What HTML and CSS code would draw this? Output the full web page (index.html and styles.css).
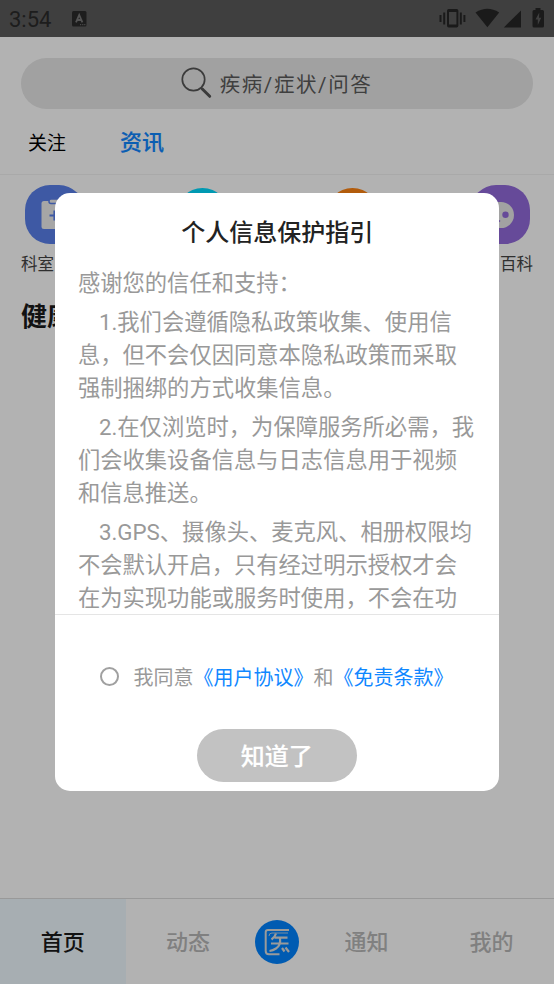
FILE: index.html
```
<!DOCTYPE html>
<html lang="zh-CN">
<head>
<meta charset="utf-8">
<title>资讯</title>
<link rel="stylesheet" href="styles.css">
</head>
<body>
<div class="app">
  <header class="status">
    <span class="clock">3:54</span>
    <svg class="status-app" width="15" height="16" viewBox="0 0 15 16"><rect width="14.5" height="15.5" rx="1.5" fill="#2a2a2a"/><path d="M4 11.3 7.2 4l3.2 7.3M5 9h4.4" fill="none" stroke="#777" stroke-width="1.8"/><path d="M8 13.7h1.2M10.2 13.7h1.2M12.2 13.7h1.2" stroke="#777"/></svg>
    <svg class="status-icons" width="108" height="22" viewBox="0 0 108 22">
      <g fill="#262626">
        <path fill-rule="evenodd" d="M9.7 1h8q1.7 0 1.7 1.700v15q0 1.700-1.700 1.700h-8q-1.700 0-1.700-1.700V2.700Q8 1 9.700 1ZM10 4v12.500h7.400V4Z"/>
        <path d="M.5 7h2v7h-2zM4.200 4.500h2v12h-2zM20.800 4.500h2v12h-2zM24.400 7h2v7h-2z"/>
        <path d="M36.500 4.500Q48.400-3 60.200 4.500L48.400 19.300Z"/>
        <path d="M82 2.500V19.500H64.800Z"/>
        <path d="M96.500 0h5v2h2q1.500 0 1.500 1.500V18q0 1.500-1.500 1.500h-8.500Q93.500 19.500 93.500 18V3.500Q93.500 2 95 2H96.500Z"/>
      </g>
      <path d="M100.300 4.500 96.500 11.500h2.300V17l3.400-7.300h-2.200Z" fill="#5b5b5b"/>
    </svg>
  </header>

  <div class="search">
    <svg width="31" height="32" viewBox="0 0 31 32" fill="none" stroke="#555"><circle cx="12.500" cy="12.500" r="11.200" stroke-width="1.700"/><path d="m20 21 2 1" stroke-width="1.500"/><path d="m21.300 22 7.400 7.300" stroke-width="3" stroke-linecap="round"/></svg>
    <span>疾病/症状/问答</span>
  </div>

  <div class="tabs"><span class="tab">关注</span><span class="tab active">资讯</span></div>

  <div class="shortcuts">
    <div class="shortcut first">
      <svg width="59" height="59" viewBox="0 0 59 59"><rect width="59" height="59" rx="25" fill="#5980eb"/><rect x="16.500" y="16" width="26" height="28" rx="2.500" fill="#eee"/><rect x="24" y="14" width="11" height="4.500" rx="2" fill="#eee" stroke="#5980eb" stroke-width="1.500"/><path d="M29.500 25.500v10M24.500 30.500h10" stroke="#5980eb" stroke-width="2.200"/></svg>
      <span>科室</span>
    </div>
    <div class="shortcut middle"><i class="dot teal"></i></div>
    <div class="shortcut middle"><i class="dot orange"></i></div>
    <div class="shortcut last">
      <svg width="59" height="59" viewBox="0 0 59 59"><rect width="59" height="59" rx="25" fill="#936bdb"/><rect x="15" y="17" width="28" height="26" rx="13" fill="#e8e8e8"/><circle cx="34.500" cy="29.800" r="3.200" fill="#936bdb"/><circle cx="23" cy="29.800" r="3.200" fill="#936bdb"/><path d="M24 35q3 3 5 .5" fill="none" stroke="#936bdb" stroke-width="1.500"/></svg>
      <span>百科</span>
    </div>
  </div>

  <h2 class="section">健康</h2>

  <nav class="nav">
    <span class="nav-item current">首页</span>
    <span class="nav-item">动态</span>
    <span class="nav-logo">
      <svg width="44" height="44" viewBox="0 0 44 44" fill="none"><circle cx="22" cy="22" r="22" fill="#0083ff"/><g stroke="#ddd"><path d="M34 10H13q-2.300 0-2.300 2.300V31q0 3.200 3.200 3.200H24.500" stroke-width="2"/><path d="M33 13H17q-3 0-3 3" stroke-width=".8"/><path d="M21 13.500q-1 3.500-4.500 6M19.500 17.700h13M16 23.500h17.500M25 18q1 7.500-4 10.500-3 2-6.500 2.500M27 28l2.500 3.500M30.500 27.500l3.500 4.500" stroke-width="2.200"/></g></svg>
    </span>
    <span class="nav-item">通知</span>
    <span class="nav-item">我的</span>
  </nav>
</div>

<div class="mask">
  <section class="dialog">
    <h1>个人信息保护指引</h1>
    <div class="terms">
      <p class="lead">感谢您的信任和支持：</p>
      <p>1.我们会遵循隐私政策收集、使用信<br>息，但不会仅因同意本隐私政策而采取<br>强制捆绑的方式收集信息。</p>
      <p>2.在仅浏览时，为保障服务所必需，我<br>们会收集设备信息与日志信息用于视频<br>和信息推送。</p>
      <p>3.GPS、摄像头、麦克风、相册权限均<br>不会默认开启，只有经过明示授权才会<br>在为实现功能或服务时使用，不会在功</p>
    </div>
    <div class="agree"><i class="radio"></i><span>我同意<a>《用户协议》</a>和<a>《免责条款》</a></span></div>
    <button class="confirm">知道了</button>
  </section>
</div>
</body>
</html>
```
FILE: styles.css
```
* { box-sizing: border-box; }
body { margin: 0; font-family: Roboto, "Noto Sans CJK SC", sans-serif; background: #fff; color: #111; font-kerning: none; }
h1, h2, p { margin: 0; }
.app { width: 554px; height: 984px; display: flex; flex-direction: column; overflow: hidden; }
.status { height: 37px; flex: none; background: #5b5b5b; display: flex; align-items: center; padding: 0 7px 0 9px; }
.clock { font-size: 22px; color: #2a2a2a; width: 63px; padding-top: 2px; }
.status-icons { margin-left: auto; }
.search { flex: none; height: 51px; margin: 21px 21px 0; border-radius: 26px; background: #e7e7e7; display: flex; align-items: center; justify-content: center; gap: 8px; color: #5b5b5b; font-size: 20.5px; letter-spacing: 1.6px; padding-right: 1px; }
.search span { padding-bottom: 2px; }
.search svg { margin-bottom: 1px; }
.tabs { flex: none; height: 66px; display: flex; align-items: center; padding: 0 28px 1px; gap: 54px; border-bottom: 1px solid #f3f3f3; }
.tab { font-size: 19px; color: #000; }
.tab.active { font-size: 22px; font-weight: 500; color: #1087ff; padding-bottom: 3px; }
.tab.active, .confirm { -webkit-text-stroke: .2px currentColor; }
.shortcuts { display: flex; flex: none; height: 108px; padding: 10px 21px 0; justify-content: space-between; }
.shortcut { width: 64px; display: flex; flex-direction: column; align-items: center; font-size: 16.500px; line-height: 24px; color: #444; }
.shortcut span { width: 100%; margin-top: 9px; }
.shortcut.first svg { margin-left: 3px; }
.shortcut.last { align-items: flex-end; padding-right: 3px; }
.shortcut.last span { width: auto; margin-right: -3px; }
.middle { padding: 3px 0 0 1px; }
.dot { width: 53px; height: 53px; border-radius: 50%; }
.teal { background: #00dcff; }
.orange { background: #ff8412; }
.section { font-size: 26px; line-height: 38px; font-weight: 700; padding: 15px 21px 0; margin-bottom: auto; color: #1a1a1a; }
.nav { flex: none; height: 86px; border-top: 1px solid #dcdcdc; display: grid; grid-template-columns: 125.500px 125px 1fr 125px 125px; font-size: 22px; font-weight: 500; color: #b8b8b8; }
.nav > * { display: flex; align-items: center; justify-content: center; }
.nav .nav-item { padding: 0 0 3px; }
.nav .current { background: #f0f9ff; color: #1a1a1a; }
.mask { position: absolute; inset: 0; background: rgba(0, 0, 0, .3); padding: 193px 55px 0; }
.dialog { width: 443.500px; height: 598px; background: #fff; border-radius: 15px; display: flex; flex-direction: column; align-items: center; padding-top: 22px; }
.dialog h1 { font-size: 24px; line-height: 36px; font-weight: 500; color: #222; padding-left: 1px; }
.terms { align-self: stretch; height: 364px; overflow: hidden; border-bottom: 1px solid #e5e5e5; padding: 16px 0 0 22.900px; font-size: 22.300px; line-height: 33px; color: #999; white-space: nowrap; }
.terms p { margin-bottom: 6px; text-indent: 21px; }
.terms .lead { text-indent: 0; }
.agree { align-self: stretch; display: flex; align-items: center; height: 30px; margin-top: 46px; padding-left: 44.500px; gap: 15px; font-size: 20px; color: #999; }
.agree a { color: #1087ff; }
.radio { width: 19px; height: 19px; border: 2px solid #a0a0a0; border-radius: 50%; }
.confirm { margin-top: 38px; width: 160px; height: 53px; border: 0; border-radius: 27px; background: #c2c2c2; color: #fff; font: 500 24px Roboto, "Noto Sans CJK SC", sans-serif; padding: 0 0 2px; }
```
